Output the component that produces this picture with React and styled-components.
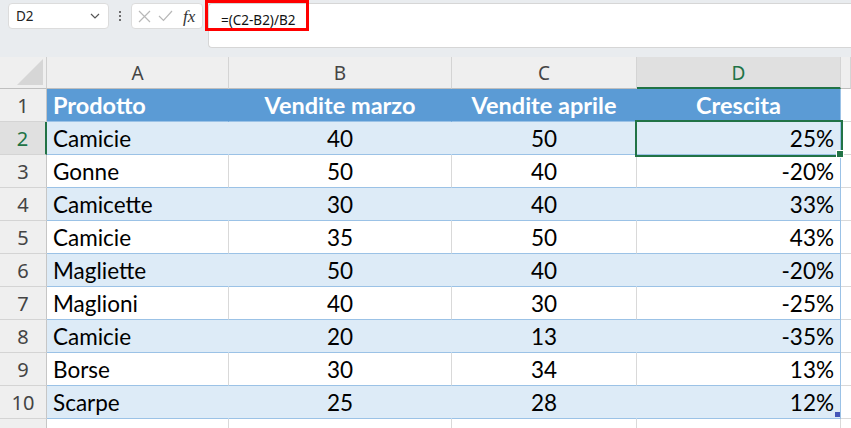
import React from "react";
import styled, { createGlobalStyle, css } from "styled-components";

const GREEN = "#217346";
const TABLE_LINE = "#9bc2e6";
const GRID = "#d9d9d9";
const COLS = "47px 182px 223px 185px 204px 1fr";

const rows = [
  ["Camicie", 40, 50, "25%"],
  ["Gonne", 50, 40, "-20%"],
  ["Camicette", 30, 40, "33%"],
  ["Camicie", 35, 50, "43%"],
  ["Magliette", 50, 40, "-20%"],
  ["Maglioni", 40, 30, "-25%"],
  ["Camicie", 20, 13, "-35%"],
  ["Borse", 30, 34, "13%"],
  ["Scarpe", 25, 28, "12%"],
];

export default function App() {
  return (
    <Page>
      <GlobalStyle />
      <TopBar>
        <NameBox>
          <span>D2</span>
          <svg width="10" height="6" viewBox="0 0 10 6">
            <path d="M1 1 L5 5 L9 1" fill="none" stroke="#555" strokeWidth="1.2" />
          </svg>
        </NameBox>
        <Dots>
          <i />
          <i />
          <i />
        </Dots>
        <FxBox>
          <svg width="13" height="13" viewBox="0 0 13 13">
            <path d="M1 1 L12 12 M12 1 L1 12" stroke="#b8b8b8" strokeWidth="1.2" />
          </svg>
          <svg width="15" height="12" viewBox="0 0 15 12">
            <path d="M1 6 L5.5 10.5 L14 1" fill="none" stroke="#b8b8b8" strokeWidth="1.2" />
          </svg>
          <Fx>fx</Fx>
        </FxBox>
        <FormulaBox>
          <Formula>=(C2-B2)/B2</Formula>
          <Highlight />
        </FormulaBox>
      </TopBar>

      <Sheet>
        <Row $height={32}>
          <Corner>
            <svg width="26" height="26" viewBox="0 0 26 26">
              <polygon points="26,0 26,26 0,26" fill="#d6d6d6" />
            </svg>
          </Corner>
          <ColHead>A</ColHead>
          <ColHead>B</ColHead>
          <ColHead>C</ColHead>
          <ColHead $active>D</ColHead>
          <ColHead />
        </Row>

        <Row>
          <RowHead>1</RowHead>
          <Cell $fill="head">Prodotto</Cell>
          <Cell $fill="head" $align="center">Vendite marzo</Cell>
          <Cell $fill="head" $align="center">Vendite aprile</Cell>
          <Cell $fill="head" $align="center" $last>Crescita</Cell>
          <Cell $fill="none" $outside />
        </Row>

        {rows.map((r, i) => {
          const fill = i % 2 === 0 ? "band" : "none";
          const n = i + 2;
          return (
            <Row key={n}>
              <RowHead $active={n === 2}>{n}</RowHead>
              <Cell $fill={fill}>{r[0]}</Cell>
              <Cell $fill={fill} $align="center">{r[1]}</Cell>
              <Cell $fill={fill} $align="center">{r[2]}</Cell>
              <Cell $fill={fill} $align="right" $last $selected={n === 2}>
                {r[3]}
                {n === 2 && <FillHandle />}
                {n === 10 && <ResizeHandle />}
              </Cell>
              <Cell $fill="none" $outside />
            </Row>
          );
        })}

        <Row>
          <RowHead />
          <Cell $fill="none" $outside />
          <Cell $fill="none" $outside />
          <Cell $fill="none" $outside />
          <Cell $fill="none" $outside />
          <Cell $fill="none" $outside />
        </Row>
      </Sheet>
    </Page>
  );
}

const GlobalStyle = createGlobalStyle`
  html, body {
    margin: 0;
    padding: 0;
    background: #fff;
    overflow: hidden;
  }
`;

const Page = styled.div`
  width: 851px;
  height: 428px;
  overflow: hidden;
  font-family: "Noto Sans", "Open Sans", sans-serif;
`;

const TopBar = styled.div`
  height: 57px;
  background: #e9ecef;
  display: flex;
  align-items: flex-start;
  padding: 3px 0 0 8px;
  box-sizing: border-box;
`;

const NameBox = styled.div`
  width: 101px;
  height: 26px;
  box-sizing: border-box;
  background: #fff;
  border: 1px solid #dcdcdc;
  border-radius: 4px;
  display: flex;
  align-items: center;
  justify-content: space-between;
  padding: 0 8px 0 7px;
  font-size: 13.5px;
  color: #222;
`;

const Dots = styled.div`
  width: 22px;
  height: 26px;
  display: flex;
  flex-direction: column;
  align-items: center;
  justify-content: center;
  gap: 2px;

  i {
    width: 2px;
    height: 2px;
    border-radius: 50%;
    background: #444;
  }
`;

const FxBox = styled.div`
  width: 72px;
  height: 26px;
  box-sizing: border-box;
  background: #fff;
  border: 1px solid #dcdcdc;
  border-radius: 4px;
  display: flex;
  align-items: center;
  gap: 7px;
  padding-left: 6px;
`;

const Fx = styled.span`
  font-family: "Liberation Serif", "DejaVu Serif", serif;
  font-style: italic;
  font-size: 17px;
  color: #333;
  margin-left: 3px;
  line-height: 1;
`;

const FormulaBox = styled.div`
  position: relative;
  flex: 1;
  margin-left: 5px;
  height: 45px;
  box-sizing: border-box;
  background: #fff;
  border: 1px solid #d6d6d6;
  border-right: none;
  border-radius: 4px 0 0 4px;
  padding: 4px 0 0 12px;
`;

const Formula = styled.span`
  font-size: 13.5px;
  color: #111;
`;

const Highlight = styled.div`
  position: absolute;
  left: -4px;
  top: -4px;
  width: 104px;
  height: 31px;
  box-sizing: border-box;
  border: 3px solid #ff0000;
`;

const Sheet = styled.div`
  display: flex;
  flex-direction: column;
`;

const Row = styled.div`
  display: grid;
  grid-template-columns: ${COLS};
  height: ${(p) => p.$height || 33}px;
`;

const Corner = styled.div`
  background: #efefef;
  border-right: 1px solid #cfcfcf;
  border-bottom: 1px solid #bfbfbf;
  display: flex;
  align-items: flex-end;
  justify-content: flex-end;
  padding: 0 3px 3px 0;
`;

const ColHead = styled.div`
  background: ${(p) => (p.$active ? "#e0e0e0" : "#efefef")};
  color: ${(p) => (p.$active ? GREEN : "#444")};
  border-right: 1px solid #d4d4d4;
  border-bottom: ${(p) => (p.$active ? `2px solid ${GREEN}` : "1px solid #bfbfbf")};
  font-size: 19px;
  display: flex;
  align-items: center;
  justify-content: center;
  padding-top: 1px;
`;

const RowHead = styled.div`
  background: ${(p) => (p.$active ? "#e0e0e0" : "#efefef")};
  color: ${(p) => (p.$active ? GREEN : "#444")};
  border-right: ${(p) => (p.$active ? `2px solid ${GREEN}` : "1px solid #c6c6c6")};
  border-bottom: 1px solid #d4d4d4;
  font-size: 20px;
  display: flex;
  align-items: center;
  justify-content: center;
`;

const fills = {
  head: css`
    background: #5b9bd5;
    color: #fff;
    font-weight: 700;
    font-size: 23.5px;
    border-right: 1px solid #5b9bd5;
    border-bottom: 1px solid ${TABLE_LINE};
  `,
  band: css`
    background: #ddebf7;
    border-right: 1px solid #ddebf7;
    border-bottom: 1px solid ${TABLE_LINE};
  `,
  none: css`
    background: #fff;
    border-right: 1px solid ${GRID};
    border-bottom: 1px solid ${TABLE_LINE};
  `,
};

const Cell = styled.div`
  position: relative;
  display: flex;
  align-items: center;
  justify-content: ${(p) =>
    p.$align === "center" ? "center" : p.$align === "right" ? "flex-end" : "flex-start"};
  padding: 0 6px;
  font-family: "Lato", "Noto Sans", sans-serif;
  font-size: 22.5px;
  color: #000;
  white-space: nowrap;
  ${(p) => fills[p.$fill]}
  ${(p) =>
    p.$last &&
    css`
      border-right: 1px solid ${TABLE_LINE};
    `}
  ${(p) =>
    p.$outside &&
    css`
      border-bottom: 1px solid ${GRID};
    `}
  ${(p) =>
    p.$selected &&
    css`
      z-index: 2;
      outline: 2px solid ${GREEN};
      outline-offset: 0px;
    `}
`;

const FillHandle = styled.span`
  position: absolute;
  right: -4px;
  bottom: -4px;
  width: 6px;
  height: 6px;
  background: ${GREEN};
  border: 1px solid #fff;
`;

const ResizeHandle = styled.span`
  position: absolute;
  right: 0;
  bottom: 1px;
  width: 5px;
  height: 5px;
  background: #4556b8;
`;
